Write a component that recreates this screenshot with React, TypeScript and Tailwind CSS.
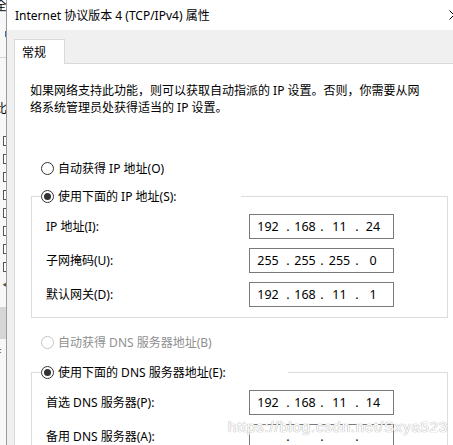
import React from "react";

function Radio({ checked = false, disabled = false, label }: { checked?: boolean; disabled?: boolean; label: string }) {
  return (
    <div className="flex items-center h-[17px] gap-[4px] whitespace-nowrap">
      <div
        className={
          disabled
            ? "w-[13px] h-[13px] rounded-full border border-[#c4c4c4] bg-white flex items-center justify-center shrink-0"
            : "w-[13px] h-[13px] rounded-full border border-[#333333] bg-white flex items-center justify-center shrink-0"
        }
      >
        {checked && <div className="w-[7px] h-[7px] rounded-full bg-[#333333]" />}
      </div>
      <span className={disabled ? "text-[#8f8f8f] leading-[17px]" : "text-black leading-[17px]"}>{label}</span>
    </div>
  );
}

function IpInput({ parts }: { parts: string[] }) {
  return (
    <div className="w-[145px] h-[25px] border border-[#7a7a7a] bg-white flex items-center text-[12.5px] leading-[23px] shrink-0">
      <span className="w-[36px] text-center">{parts[0]}</span>
      <span className="w-[4px] text-center">.</span>
      <span className="w-[30px] text-center">{parts[1]}</span>
      <span className="w-[4px] text-center">.</span>
      <span className="w-[31px] text-center">{parts[2]}</span>
      <span className="w-[4px] text-center">.</span>
      <span className="w-[28px] text-center">{parts[3]}</span>
    </div>
  );
}

function Row({ label, parts }: { label: string; parts: string[] }) {
  return (
    <div className="flex items-center h-[25px]">
      <span className="w-[203px] shrink-0 whitespace-nowrap leading-[17px]">{label}</span>
      <IpInput parts={parts} />
    </div>
  );
}

function LeftStrip() {
  return (
    <div className="w-[7px] shrink-0 border-r border-[#9a9a9a] bg-[#f7f7f7] overflow-hidden flex flex-col">
      <div className="h-[12px] overflow-hidden border-b border-[#cfcfcf] bg-white">
        <span className="block -ml-[5px] text-[12px] leading-[12px]">全</span>
      </div>
      <div className="mt-[19px] ml-[5px] w-[3px] h-[6px] bg-[#3d6ea8]" />
      <div className="mt-[20px] h-px bg-[#d4d4d4]" />
      <div className="mt-[44px] h-[14px] overflow-hidden">
        <span className="block -ml-[5px] text-[12px] leading-[14px]">比</span>
      </div>
      <div className="mt-[20px] flex flex-col gap-[8px]">
        {[0, 1, 2, 3, 4, 5, 6, 7].map((i) => (
          <div key={i} className="ml-[3px] w-[10px] h-[10px] border border-[#555555] bg-white" />
        ))}
      </div>
      <div className="mt-[8px] ml-[2px] text-[9px] leading-[10px] text-[#555555]">◀</div>
      <div className="mt-[17px] h-[32px] bg-[#d6d6d6]" />
      <div className="mt-[7px] h-[14px] overflow-hidden">
        <span className="block -ml-[5px] text-[12px] leading-[14px] text-[#7a4a10]">扌</span>
      </div>
    </div>
  );
}

export default function App() {
  return (
    <div className="relative w-[453px] h-[445px] overflow-hidden flex bg-white text-black text-[12px] font-['Noto_Sans','Noto_Sans_CJK_SC',sans-serif]">
      <LeftStrip />
      <div className="flex-1 min-w-0 flex flex-col">
        <div className="h-[30px] shrink-0 bg-white flex items-center justify-between pl-[8px]">
          <span className="whitespace-nowrap leading-[17px]">Internet 协议版本 4 (TCP/IPv4) 属性</span>
          <svg width="10" height="10" viewBox="0 0 10 10" className="shrink-0 -mr-[6px]">
            <path d="M0.5 0.5 L9.5 9.5 M9.5 0.5 L0.5 9.5" stroke="#000" strokeWidth="1" fill="none" />
          </svg>
        </div>
        <div className="flex-1 bg-[#f0f0f0] pl-[7px] pt-[9px] flex flex-col">
          <div className="flex">
            <div className="relative z-10 -mb-px h-[25px] w-[51px] bg-white border border-b-0 border-[#d9d9d9] pl-[7px] flex items-center">
              <span className="leading-[17px]">常规</span>
            </div>
          </div>
          <div className="flex-1 bg-white border-l border-t border-[#d9d9d9] pl-[15px]">
            <div className="pt-[18px] leading-[17px] whitespace-nowrap">
              <div>如果网络支持此功能，则可以获取自动指派的 IP 设置。否则，你需要从网</div>
              <div>络系统管理员处获得适当的 IP 设置。</div>
            </div>
            <div className="mt-[44px] ml-[11px]">
              <Radio label="自动获得 IP 地址(O)" />
            </div>
            <fieldset className="mt-[11px] ml-px w-[417px] border border-[#dcdcdc]">
              <legend className="ml-[9px] w-[200px] h-[17px] bg-white">
                <Radio checked label="使用下面的 IP 地址(S):" />
              </legend>
              <div className="pl-[14px] pt-[9px] pb-[10px] flex flex-col gap-[9px]">
                <Row label="IP 地址(I):" parts={["192", "168", "11", "24"]} />
                <Row label="子网掩码(U):" parts={["255", "255", "255", "0"]} />
                <Row label="默认网关(D):" parts={["192", "168", "11", "1"]} />
              </div>
            </fieldset>
            <div className="mt-[16px] ml-[11px]">
              <Radio disabled label="自动获得 DNS 服务器地址(B)" />
            </div>
            <fieldset className="mt-[13px] ml-px w-[417px] h-[120px] border border-[#dcdcdc]">
              <legend className="ml-[9px] w-[247px] h-[17px] bg-white">
                <Radio checked label="使用下面的 DNS 服务器地址(E):" />
              </legend>
              <div className="pl-[14px] pt-[9px] flex flex-col gap-[9px]">
                <Row label="首选 DNS 服务器(P):" parts={["192", "168", "11", "14"]} />
                <Row label="备用 DNS 服务器(A):" parts={["", "", "", ""]} />
              </div>
            </fieldset>
          </div>
        </div>
      </div>
      <div className="absolute left-[228px] top-[419px] whitespace-nowrap text-[15px] leading-[16px] tracking-[0.8px] text-white font-['Liberation_Sans',sans-serif] [text-shadow:0_0_1px_#aaaaaa,0_0_1px_#aaaaaa] pointer-events-none">
        https://blog.csdn.net/Sxya523
      </div>
    </div>
  );
}
